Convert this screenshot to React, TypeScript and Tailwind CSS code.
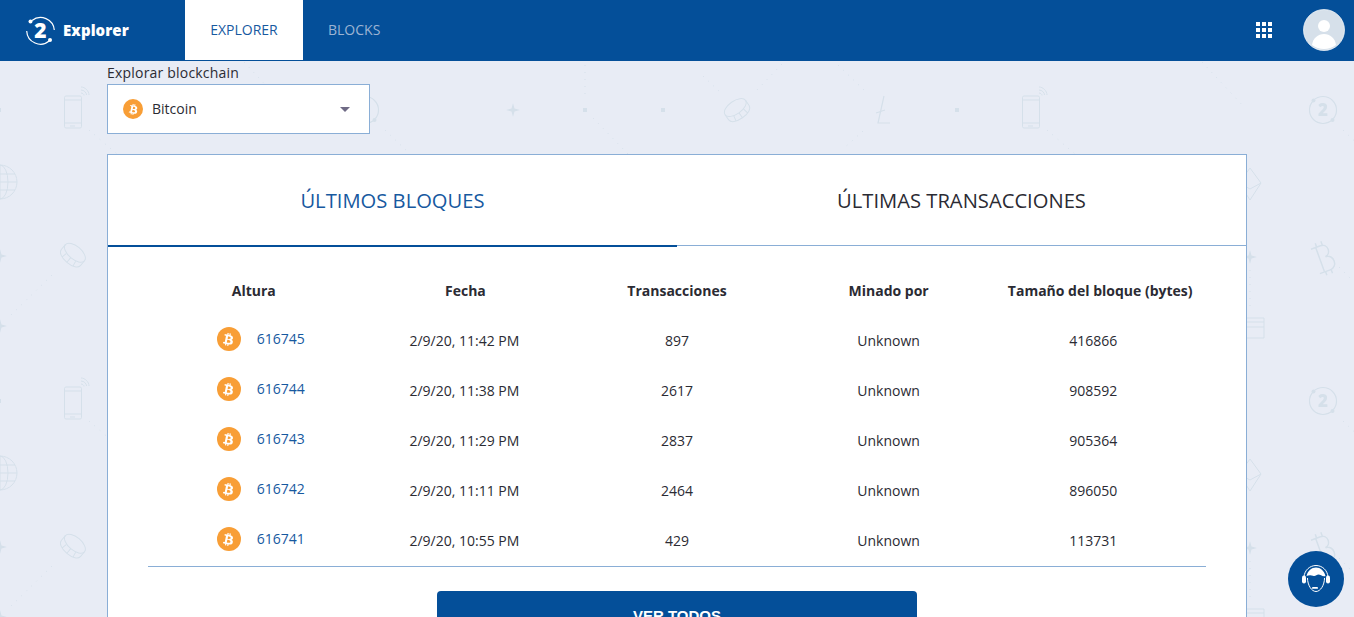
import { FaBtc } from 'react-icons/fa'

const rows = [
  { height: '616745', date: '2/9/20, 11:42 PM', txs: '897', size: '416866' },
  { height: '616744', date: '2/9/20, 11:38 PM', txs: '2617', size: '908592' },
  { height: '616743', date: '2/9/20, 11:29 PM', txs: '2837', size: '905364' },
  { height: '616742', date: '2/9/20, 11:11 PM', txs: '2464', size: '896050' },
  { height: '616741', date: '2/9/20, 10:55 PM', txs: '429', size: '113731' },
]

const Logo = () => (
  <div className="flex items-center gap-2">
    <div className="relative flex h-[29px] w-[29px] items-center justify-center">
      <svg viewBox="0 0 29 29" className="absolute inset-0 h-full w-full" fill="none" stroke="#fff" strokeWidth="1.2">
        <path d="M6 4.500A13.800 13.800 0 0 1 28.300 14" />
        <path d="M23.500 24.800A13.800 13.800 0 0 1 .7 15" />
        <circle cx="4.500" cy="5.500" r="2" fill="#fff" stroke="none" />
        <circle cx="24" cy="24" r="2" fill="#fff" stroke="none" />
      </svg>
      <span className="text-[21px] leading-none font-extrabold text-white">2</span>
    </div>
    <span className="text-[15px] font-extrabold tracking-[0.1px] text-white">Explorer</span>
  </div>
)

const AppsIcon = () => (
  <div className="grid grid-cols-3 gap-[2px]">
    {Array.from({ length: 9 }).map((_, i) => (
      <span key={i} className="h-1 w-1 bg-white" />
    ))}
  </div>
)

const Avatar = () => (
  <svg viewBox="0 0 42 42" className="h-[42px] w-[42px]">
    <circle cx="21" cy="21" r="20.500" fill="#d6e0ea" stroke="#fff" strokeOpacity="0.7" />
    <circle cx="21" cy="17" r="6" fill="#fff" />
    <path d="M9 36c1-7 6-11 12-11s11 4 12 11a20 20 0 0 1-24 0z" fill="#fff" />
  </svg>
)

const SupportIcon = () => (
  <svg viewBox="0 0 32 32" className="h-8 w-8" fill="none" stroke="#fff">
    <path d="M4 14C4.500 7 10 2.500 16 2.500S27.500 7 28 14" strokeWidth="1" />
    <path d="M6.500 13c1.500-5.500 5-8.500 9.500-8.500s8 3 9.500 8.500c-3 1-5-1.500-7-1.500s-3 2-5.500 1.200c-2-.8-4.500-.7-6.500.3z" fill="#fff" stroke="none" />
    <path d="M7.500 15c0 7 4 13.500 8.500 13.500s8.500-6.500 8.500-13.500" strokeWidth="1" />
    <rect x="2" y="12.500" width="4" height="8" rx="2" fill="#fff" stroke="none" />
    <rect x="26" y="12.500" width="4" height="8" rx="2" fill="#fff" stroke="none" />
    <rect x="12" y="24" width="6" height="1.800" rx="0.900" fill="#fff" stroke="none" />
  </svg>
)

// faint doodles behind the page, one tile repeats every 958x291
const BackgroundPattern = () => (
  <svg className="absolute inset-0 h-full w-full">
    <defs>
      <pattern id="doodles" x="0" y="61" width="958" height="291" patternUnits="userSpaceOnUse">
        <g fill="none" stroke="#d5e0ea" strokeWidth="1">
          {/* phone */}
          <rect x="64.500" y="35" width="17" height="32" rx="1.500" />
          <path d="M64.500 39h17M64.500 62h17M70 65h5" />
          <path d="M81 26c4 0 8 4 8 8M81 29c3 0 5.500 2.500 5.500 5M81 32c1.500 0 3 1 3 2.500" />
          {/* two coin */}
          <circle cx="365" cy="49" r="13.500" strokeWidth="1.200" />
          {/* tilted coin */}
          <g transform="rotate(-35 737 49)">
            <ellipse cx="737" cy="46" rx="12.500" ry="6.500" />
            <path d="M724.500 46v6c0 4 5 6.500 12.500 6.500s12.500-2.500 12.500-6.500v-6M730 57l1-5M737 58.500v-6M744 57l-1-5" />
          </g>
          {/* litecoin */}
          <path d="M884 35l-6 27h12M876 52l9-3" strokeWidth="1.200" />
          {/* bitcoin */}
          <path
            d="M357 185h10c8 0 8 11 1 12 9 0 9 14 0 14h-11M362 185v26M363 181v4M369 181v4M363 211v4M369 211v4"
            transform="rotate(-20 364 198)"
            strokeWidth="1.500"
          />
          {/* globe */}
          <g>
            <circle cx="0" cy="121" r="17" />
            <ellipse cx="0" cy="121" rx="8" ry="17" />
            <path d="M-17 121h34M0 104v34M-15 113h30M-15 129h30" />
          </g>
          {/* diamond */}
          <path d="M292 107l11 15-11 17-11-17zM281 122l11 6 11-6" />
          {/* tilted coin, second row */}
          <g transform="rotate(40 73 194)">
            <ellipse cx="73" cy="191" rx="12.500" ry="6.500" />
            <path d="M60.500 191v6c0 4 5 6.500 12.500 6.500s12.500-2.500 12.500-6.500v-6M66 202l1-5M73 203.500v-6M80 202l-1-5" />
          </g>
          {/* card */}
          <path d="M280 257h26v20h-26zM280 261h26M280 266h26" />
          {/* dotted lines */}
          <g strokeDasharray="1 6">
            <path d="M52 214L8 257" />
            <path d="M585 4v35" />
            <path d="M593 57l35 36" />
            <path d="M703 15l17 16M782 3l-27 28" />
            <path d="M838 4l28 27M863 70l-20 18" />
            <path d="M385 69l25 24" />
            <path d="M89 69l28 24" />
            <path d="M244 1l43 46" />
            <path d="M292 209v38" />
            <path d="M381 206l13 13" />
          </g>
        </g>
        <text x="365" y="55" textAnchor="middle" fontFamily="'Open Sans', sans-serif" fontSize="17" fontWeight="800" fill="#d5e0ea">2</text>
        <g fill="#d5e0ea">
          <circle cx="355.500" cy="39.500" r="2" />
          <circle cx="374.500" cy="59" r="2" />
          <path d="M513 42l1.500 5.500 5.500 1.500-5.500 1.500-1.500 5.500-1.500-5.500-5.500-1.500 5.500-1.500z" />
          <path d="M292 189l1.500 5.500 5.500 1.500-5.500 1.500-1.500 5.500-1.500-5.500-5.500-1.500 5.500-1.500z" />
          <path d="M0 188l1.500 5.500 5.500 1.500-5.500 1.500-1.500 5.500-1.500-5.500-5.500-1.500 5.500-1.500z" />
          <path d="M0 258l1.500 5.500 5.500 1.500-5.500 1.500-1.500 5.500-1.500-5.500-5.500-1.500 5.500-1.500z" />
          <path d="M958 188l1.500 5.500 5.500 1.500-5.500 1.500-1.500 5.500-1.500-5.500-5.500-1.500 5.500-1.500z" />
          <rect x="583" y="47" width="4" height="4" />
          <rect x="661" y="47" width="4" height="4" />
          <rect x="955" y="47" width="3" height="4" />
          <rect x="0" y="47" width="1" height="4" />
        </g>
      </pattern>
    </defs>
    <rect width="100%" height="100%" fill="url(#doodles)" />
  </svg>
)

const headers = ['Altura', 'Fecha', 'Transacciones', 'Minado por', 'Tamaño del bloque (bytes)']

export default function App() {
  return (
    <div className="relative h-screen overflow-hidden bg-[#e8ecf5] font-['Open_Sans',sans-serif] text-[#2b2b33]">
      <BackgroundPattern />

      <header className="relative flex h-[61px] items-stretch bg-[#044f99] pb-px">
        <div className="flex w-[185px] items-center pl-[26px]">
          <Logo />
        </div>
        <nav className="flex text-sm">
          <a className="flex w-[118px] items-center justify-center bg-white text-[#17599f]">EXPLORER</a>
          <a className="flex items-center pl-[25px] text-[#9db4d3]">BLOCKS</a>
        </nav>
        <div className="ml-auto flex items-center gap-[31px] pr-[9px]">
          <AppsIcon />
          <Avatar />
        </div>
      </header>

      <main className="relative px-[107px]">
        <label className="block h-[23px] pt-[2px] text-sm leading-[19px] tracking-[0.2px]">Explorar blockchain</label>
        <div className="flex h-[50px] w-[263px] items-center border border-[#8aaed6] bg-white pr-[19px] pl-[15px]">
          <span className="flex h-5 w-5 shrink-0 items-center justify-center rounded-full bg-[#f89e36] text-white">
            <FaBtc className="h-[11px] w-[11px] rotate-12" />
          </span>
          <span className="ml-[9px] text-sm">Bitcoin</span>
          <span className="ml-auto h-0 w-0 border-x-[5px] border-t-[5px] border-x-transparent border-t-[#6f6a85]" />
        </div>

        <section className="mt-5 w-[1140px] border border-[#8aaed6] bg-white">
          <div className="flex h-[91px] text-[20.200px]">
            <div className="relative -mb-px flex w-[569px] items-center justify-center border-b-2 border-[#044f99] pt-[1px] text-[#17599f]">
              ÚLTIMOS BLOQUES
            </div>
            <div className="flex flex-1 items-center justify-center border-b border-[#8aaed6] pt-[1px]">
              ÚLTIMAS TRANSACCIONES
            </div>
          </div>

          <div className="px-10">
            <div className="grid h-[70px] grid-cols-5 items-end pb-[15px] text-center text-sm font-bold">
              {headers.map(h => (
                <div key={h}>{h}</div>
              ))}
            </div>
            <div className="border-b border-[#8aaed6] text-center text-sm">
              {rows.map(row => (
                <div key={row.height} className="grid h-[50px] grid-cols-5 items-center">
                  <div className="flex items-center justify-center gap-4 pb-1 pl-[14px]">
                    <span className="flex h-6 w-6 shrink-0 items-center justify-center rounded-full bg-[#f89e36] text-white">
                      <FaBtc className="h-[13px] w-[13px] rotate-12" />
                    </span>
                    <a className="text-[#17599f]">{row.height}</a>
                  </div>
                  <div className="pr-[2px]">{row.date}</div>
                  <div>{row.txs}</div>
                  <div>Unknown</div>
                  <div className="pr-[14px]">{row.size}</div>
                </div>
              ))}
            </div>
            <div className="flex justify-center pt-6 pb-6">
              <button
                type="button"
                className="h-[50px] w-[480px] rounded-sm bg-[#044f99] font-['Liberation_Sans',sans-serif] text-[15px] font-bold text-white"
              >
                VER TODOS
              </button>
            </div>
          </div>
        </section>
      </main>

      <button
        type="button"
        className="absolute right-[10px] bottom-[10px] flex h-14 w-14 items-center justify-center rounded-full bg-[#044f99]"
      >
        <SupportIcon />
      </button>
    </div>
  )
}
